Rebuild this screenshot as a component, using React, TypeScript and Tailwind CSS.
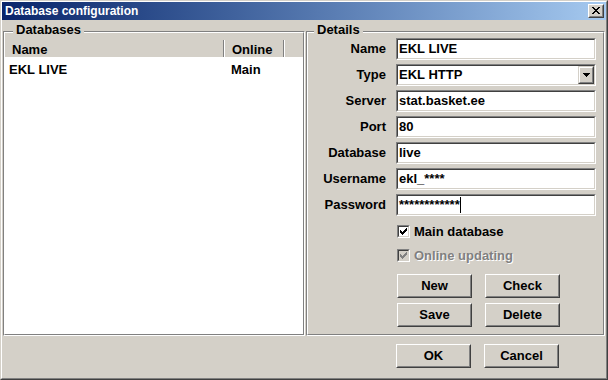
import type { ReactNode } from 'react';

function Field({ children, combo }: { children?: ReactNode; combo?: boolean }) {
  return (
    <div className="h-[22px] w-[200px] border border-t-[#808080] border-l-[#808080] border-b-white border-r-white">
      <div className="flex h-full items-center border border-t-[#404040] border-l-[#404040] border-b-[#d4d0c8] border-r-[#d4d0c8] bg-white pl-[1px]">
        <span className="flex-1 whitespace-nowrap">{children}</span>
        {combo && (
          <div className="h-full w-[16px] border border-t-[#d4d0c8] border-l-[#d4d0c8] border-b-[#404040] border-r-[#404040] bg-[#d4d0c8]">
            <div className="flex h-full items-center justify-center border border-t-white border-l-white border-b-[#808080] border-r-[#808080]">
              <svg width="7" height="4" viewBox="0 0 7 4" shapeRendering="crispEdges">
                <polygon points="0,0 7,0 3.5,4" fill="#000" />
              </svg>
            </div>
          </div>
        )}
      </div>
    </div>
  );
}

function Button({ label }: { label: string }) {
  return (
    <div className="h-[24px] w-[75px] border border-t-white border-l-white border-b-[#404040] border-r-[#404040]">
      <div className="flex h-full items-center justify-center border border-t-[#d4d0c8] border-l-[#d4d0c8] border-b-[#808080] border-r-[#808080]">
        {label}
      </div>
    </div>
  );
}

function CheckBox({ label, disabled }: { label: string; disabled?: boolean }) {
  return (
    <div className="flex h-[13px] items-center">
      <div className="h-[13px] w-[13px] border border-t-[#808080] border-l-[#808080] border-b-white border-r-white">
        <div
          className={
            'flex h-full items-center justify-center border border-t-[#404040] border-l-[#404040] border-b-[#d4d0c8] border-r-[#d4d0c8] ' +
            (disabled ? 'bg-[#d4d0c8]' : 'bg-white')
          }
        >
          <svg width="7" height="7" viewBox="0 0 7 7" shapeRendering="crispEdges">
            <path
              d="M6 0h1v3h-1v1h-1v1h-1v1h-1v1h-1v-1h-1v-1h-1v-3h1v1h1v1h1v-1h1v-1h1z"
              fill={disabled ? '#808080' : '#000'}
            />
          </svg>
        </div>
      </div>
      <span
        className={
          'ml-[4px] whitespace-nowrap ' +
          (disabled ? 'text-[#808080] [text-shadow:1px_1px_0_#fff]' : '')
        }
      >
        {label}
      </span>
    </div>
  );
}

const details: [string, ReactNode, boolean?][] = [
  ['Name', 'EKL LIVE'],
  ['Type', 'EKL HTTP', true],
  ['Server', 'stat.basket.ee'],
  ['Port', '80'],
  ['Database', 'live'],
  ['Username', 'ekl_****'],
  [
    'Password',
    <span className="flex items-center">
      ************
      <span className="ml-[0px] inline-block h-[16px] w-[1px] bg-black" />
    </span>,
  ],
];

export default function App() {
  return (
    <div className="h-[380px] w-[608px] border border-t-[#d4d0c8] border-l-[#d4d0c8] border-b-[#404040] border-r-[#404040] bg-[#d4d0c8] font-['Liberation_Sans',Arial,sans-serif] text-[13px] leading-4 font-bold text-black">
      <div className="flex h-full flex-col border border-t-white border-l-white border-b-[#808080] border-r-[#808080]">
        {/* title bar */}
        <div className="flex h-[18px] items-center bg-linear-to-r from-[#0a246a] to-[#a6caf0] pr-[2px] pb-[1px] pl-[3px]">
          <span className="text-[12px] text-white">Database configuration</span>
          <div className="ml-auto h-[14px] w-[16px] border border-t-white border-l-white border-b-[#404040] border-r-[#404040] bg-[#d4d0c8]">
            <div className="flex h-full items-center justify-center border border-t-[#d4d0c8] border-l-[#d4d0c8] border-b-[#808080] border-r-[#808080]">
              <svg width="8" height="7" viewBox="0 0 8 7" shapeRendering="crispEdges">
                <path
                  d="M0 0h2v1h1v1h2v-1h1v-1h2v1h-1v1h-1v1h-1v1h1v1h1v1h1v1h-2v-1h-1v-1h-2v1h-1v1h-2v-1h1v-1h1v-1h1v-1h-1v-1h-1v-1h-1z"
                  fill="#000"
                />
              </svg>
            </div>
          </div>
        </div>

        <div className="flex gap-[1px] pt-[11px] pl-[1px]">
          {/* Databases */}
          <div className="relative h-[305px] w-[302px] border border-t-[#808080] border-l-[#808080] border-b-white border-r-white">
            <span className="absolute top-[-10px] left-[9px] bg-[#d4d0c8] px-[3px]">Databases</span>
            <div className="flex h-full flex-col border border-t-white border-l-white border-b-[#808080] border-r-[#808080]">
              <div className="mt-[7px] flex-1 bg-white">
                <div className="flex h-[17px] bg-[#d4d0c8]">
                  <div className="w-[219px] border-r border-r-[#808080] pt-[2px] pl-[7px]">Name</div>
                  <div className="w-[60px] border-x border-l-white border-r-[#808080] pt-[2px] pl-[7px]">Online</div>
                  <div className="flex-1 border-l border-l-white" />
                </div>
                <div className="flex pt-[5px]">
                  <span className="w-[226px] pl-[4px]">EKL LIVE</span>
                  <span>Main</span>
                </div>
              </div>
            </div>
          </div>

          {/* Details */}
          <div className="relative h-[305px] w-[299px] border border-t-[#808080] border-l-[#808080] border-b-white border-r-white">
            <span className="absolute top-[-10px] left-[7px] bg-[#d4d0c8] px-[3px]">Details</span>
            <div className="flex h-full flex-col border border-t-white border-l-white border-b-[#808080] border-r-[#808080] pt-[5px]">
              <div className="flex flex-col gap-[4px]">
                {details.map(([label, value, combo]) => (
                  <div key={label} className="flex items-center gap-[10px]">
                    <span className="w-[78px] text-right">{label}</span>
                    <Field combo={combo}>{value}</Field>
                  </div>
                ))}
              </div>
              <div className="mt-[9px] ml-[89px] flex flex-col gap-[11px]">
                <CheckBox label="Main database" />
                <CheckBox label="Online updating" disabled />
              </div>
              <div className="mt-[12px] ml-[89px] grid w-[163px] grid-cols-2 gap-x-[13px] gap-y-[5px]">
                <Button label="New" />
                <Button label="Check" />
                <Button label="Save" />
                <Button label="Delete" />
              </div>
            </div>
          </div>
        </div>

        {/* footer */}
        <div className="mt-[8px] flex gap-[13px] pl-[394px]">
          <Button label="OK" />
          <Button label="Cancel" />
        </div>
      </div>
    </div>
  );
}
